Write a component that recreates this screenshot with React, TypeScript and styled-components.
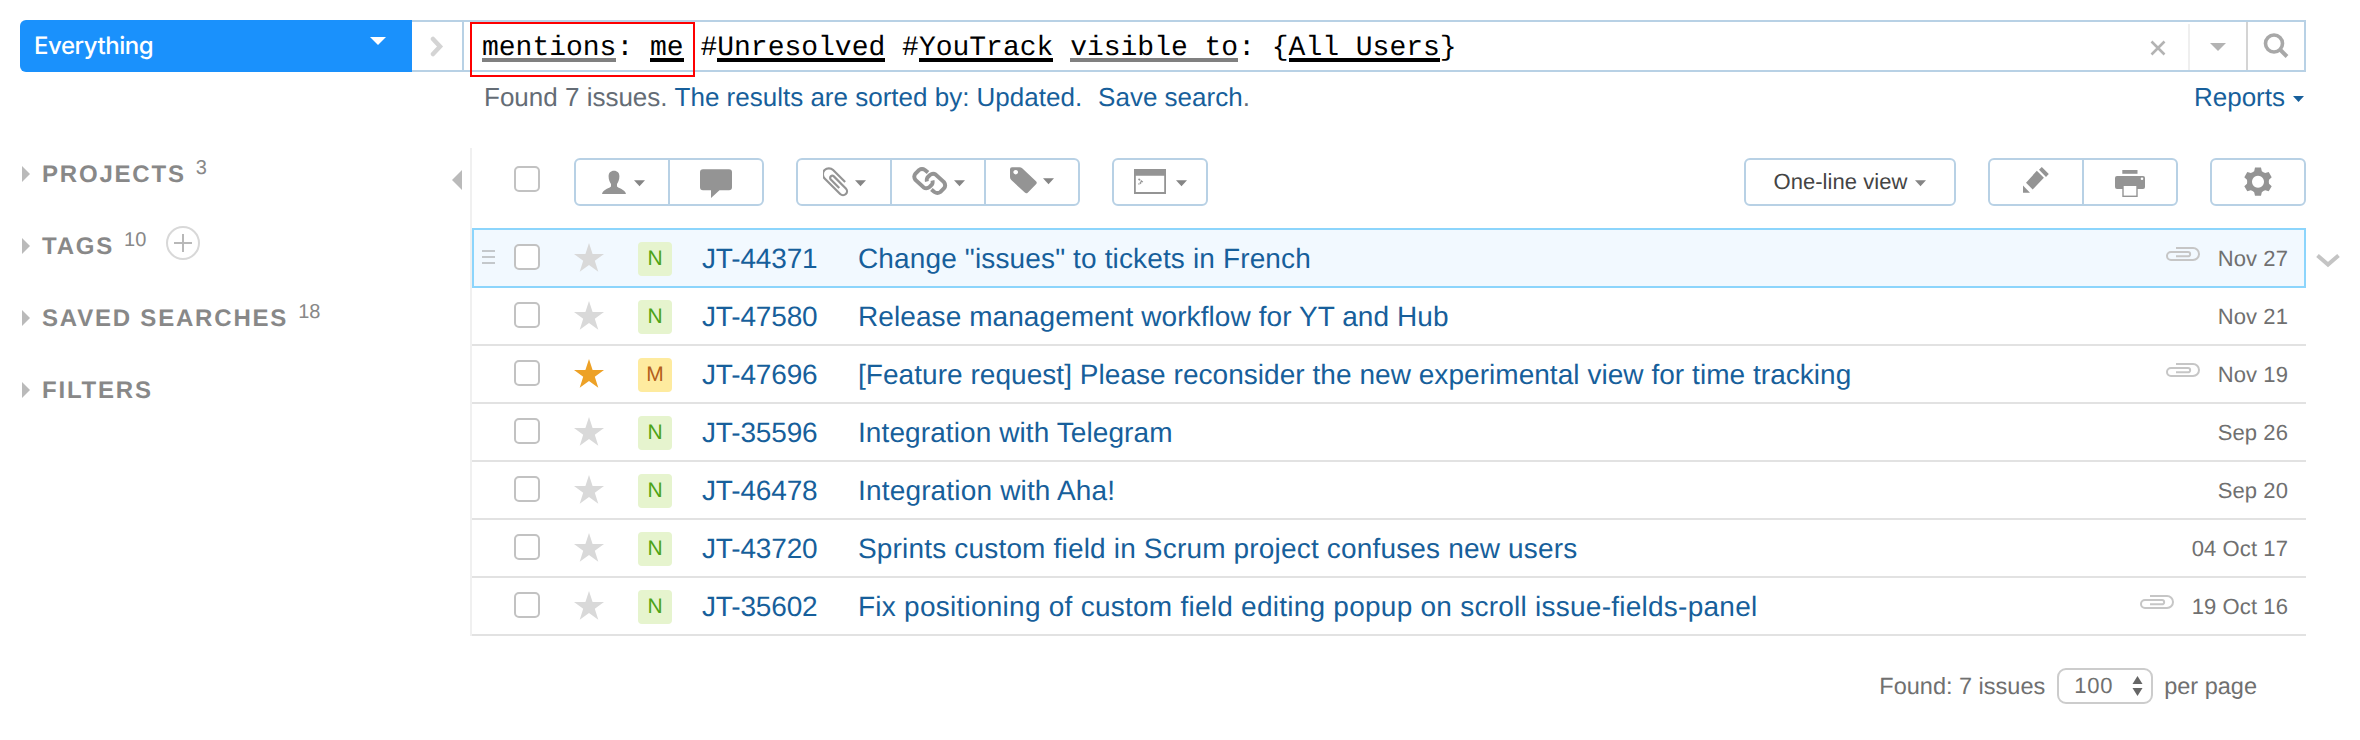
import React from "react";
import styled, { createGlobalStyle } from "styled-components";

const GlobalStyle = createGlobalStyle`
  * { box-sizing: border-box; }
  body { margin: 0; background: #fff; text-rendering: geometricPrecision; }
  svg { display: block; flex: none; }
`;

const colors = {
  link: "#175f9b",
  line: "#b8d1e5",
  icon: "#949494",
  muted: "#bababa",
  text: "#707070",
};

const Page = styled.div`
  width: 2360px;
  height: 740px;
  padding-top: 20px;
  overflow: hidden;
  font-family: "Liberation Sans", Arial, sans-serif;
  white-space: nowrap;
`;

/* ---------- search header ---------- */

const Header = styled.header`
  display: flex;
  width: 2286px;
  height: 52px;
  margin-left: 20px;
`;

const ContextSelect = styled.div`
  display: flex;
  align-items: center;
  justify-content: space-between;
  width: 392px;
  padding: 0 26px 0 14px;
  border-radius: 6px 0 0 6px;
  background: #1a91fc;
  color: #fff;
  font: 500 24px/50px Inter, sans-serif;
  letter-spacing: -0.45px;
`;

const ContextLabel = styled.span`
  margin-top: -1px;
`;

const SearchBox = styled.div`
  display: flex;
  flex: 1;
  border: 2px solid ${colors.line};
  border-left: 0;
`;

const SearchCell = styled.div<{ $w: number; $divider?: string; $inset?: number; $shift?: number }>`
  display: flex;
  align-items: center;
  justify-content: center;
  width: ${(p) => p.$w}px;
  margin-top: ${(p) => p.$inset ?? 0}px;
  padding-bottom: ${(p) => p.$shift ?? 0}px;
  border-left: ${(p) => (p.$divider ? `2px solid ${p.$divider}` : "0")};
`;

const Query = styled.div`
  position: relative;
  flex: 1;
  padding-left: 18px;
  border-left: 2px solid ${colors.line};
  color: #000;
  font: 28px/54px "Liberation Mono", "Courier New", monospace;
  white-space: pre;
`;

const Term = styled.span<{ $tone: string }>`
  display: inline-block;
  height: 40px;
  line-height: 54px;
  vertical-align: top;
  border-bottom: 4px solid ${(p) => p.$tone};
`;

const Highlight = styled.div`
  position: absolute;
  left: 6px;
  top: 0;
  width: 225px;
  height: 55px;
  border: 2px solid #fe0000;
`;

const SubHeader = styled.div`
  display: flex;
  width: 2304px;
  height: 76px;
  padding: 10px 0 0 484px;
  color: #646c75;
  font-size: 26px;
  line-height: 30px;
`;

const Link = styled.a<{ $gap?: number }>`
  margin-left: ${(p) => p.$gap ?? 0}px;
  color: ${colors.link};
`;

const Reports = styled.div`
  display: flex;
  align-items: center;
  gap: 8px;
  height: 30px;
  margin-left: auto;
  color: ${colors.link};
`;

/* ---------- body ---------- */

const Body = styled.div`
  display: flex;
`;

const Sidebar = styled.nav`
  display: flex;
  justify-content: space-between;
  width: 470px;
  padding: 0 8px 0 22px;
`;

const SectionList = styled.div`
  display: flex;
  flex-direction: column;
  gap: 20px;
`;

const Section = styled.div`
  display: flex;
  align-items: center;
  height: 52px;
  color: #888;
`;

const SectionName = styled.span`
  margin-left: 12px;
  padding-top: 2px;
  font-size: 24px;
  font-weight: bold;
  line-height: 50px;
  letter-spacing: 1.8px;
`;

const Count = styled.sup`
  margin: -13px 0 0 10px;
  font-size: 20px;
  line-height: 24px;
  vertical-align: baseline;
`;

const AddTag = styled.div`
  display: flex;
  align-items: center;
  justify-content: center;
  width: 34px;
  height: 34px;
  margin: -6px 0 0 20px;
  border: 2px solid #d8d8d8;
  border-radius: 50%;
`;

const Collapse = styled.div`
  padding-top: 22px;
`;

const Main = styled.main`
  width: 1836px;
`;

const IssuePanel = styled.section`
  border-left: 2px solid #f0f0f0;
`;

const Toolbar = styled.div`
  display: flex;
  height: 80px;
  padding: 10px 0 22px 42px;
`;

const Checkbox = styled.span`
  flex: none;
  width: 26px;
  height: 26px;
  border: 2px solid #c2c2c2;
  border-radius: 5px;
  background: #fff;
`;

const ToolbarCheck = styled(Checkbox)`
  margin-top: 8px;
`;

const Group = styled.div<{ $gap: number | "auto" }>`
  display: flex;
  height: 48px;
  margin-left: ${(p) => (p.$gap === "auto" ? "auto" : `${p.$gap}px`)};
  border: 2px solid ${colors.line};
  border-radius: 6px;
`;

const ToolButton = styled.div<{ $pad: number; $gap?: number; $w?: number }>`
  display: flex;
  align-items: center;
  gap: ${(p) => p.$gap ?? 0}px;
  width: ${(p) => p.$w ?? 92}px;
  padding-left: ${(p) => p.$pad}px;
  color: #444;
  font-size: 22px;
  line-height: 44px;
  letter-spacing: 0.05px;
  & + & {
    width: 94px;
    border-left: 2px solid ${colors.line};
  }
`;

const Lift = styled.span`
  padding-bottom: 4px;
`;

const Row = styled.div<{ $selected?: boolean }>`
  position: relative;
  display: flex;
  align-items: center;
  height: ${(p) => (p.$selected ? 60 : 58)}px;
  width: 1834px;
  border: 0 solid ${(p) => (p.$selected ? "#8cd5fc" : "#e2e2e2")};
  border-width: ${(p) => (p.$selected ? "2px" : "0 0 2px")};
  background: ${(p) => (p.$selected ? "#f2f9ff" : "transparent")};
  padding: ${(p) => (p.$selected ? "0 16px 0 0" : "0 18px 0 2px")};
`;

const Handle = styled.div`
  width: 40px;
  padding-left: 8px;
`;

const RowCheck = styled(Checkbox)`
  margin-top: -2px;
`;

const StarSlot = styled.div`
  margin: -2px 0 0 34px;
`;

const Badge = styled.span<{ $major?: boolean }>`
  width: 34px;
  height: 34px;
  margin: 2px 0 0 34px;
  border-radius: 4px;
  background: ${(p) => (p.$major ? "#feeb9f" : "#e6f4ce")};
  color: ${(p) => (p.$major ? "#b45f1b" : "#4da317")};
  font-size: 21px;
  line-height: 34px;
  text-align: center;
`;

const IssueId = styled.a`
  width: 156px;
  margin-left: 30px;
  padding-top: 1px;
  color: ${colors.link};
  font-size: 28px;
  line-height: 55px;
  letter-spacing: -0.15px;
`;

const Title = styled.a<{ $tracking: number }>`
  flex: 1;
  padding-top: 1px;
  color: ${colors.link};
  font-size: 28px;
  line-height: 55px;
  letter-spacing: ${(p) => p.$tracking}px;
`;

const DateText = styled.span`
  margin-left: 18px;
  padding-top: 1px;
  color: ${colors.text};
  font-size: 22px;
  line-height: 55px;
  letter-spacing: 0.1px;
`;

const ClipSlot = styled.div`
  margin-top: -8px;
`;

const RowExpand = styled.div`
  position: absolute;
  left: 1842px;
  top: 24px;
`;

const Footer = styled.footer`
  display: flex;
  align-items: center;
  justify-content: flex-end;
  height: 36px;
  margin: 32px 49px 0 0;
  color: ${colors.text};
  font-size: 23.5px;
  line-height: 36px;
`;

const PageSize = styled.div`
  display: flex;
  align-items: center;
  justify-content: space-between;
  width: 96px;
  height: 36px;
  margin: 0 11px 0 12px;
  padding: 0 8px 0 15px;
  border: 2px solid #ccc;
  border-radius: 9px;
  font-size: 22px;
  letter-spacing: 0.8px;
`;

/* ---------- icons ---------- */

const Triangle = ({ w, h, dir = "down", fill }: { w: number; h: number; dir?: string; fill: string }) => {
  const points: Record<string, string> = {
    down: `0,0 ${w},0 ${w / 2},${h}`,
    right: `0,0 ${w},${h / 2} 0,${h}`,
    left: `${w},0 0,${h / 2} ${w},${h}`,
  };
  return (
    <svg width={w} height={h}>
      <polygon points={points[dir]} fill={fill} />
    </svg>
  );
};

const Caret = () => (
  <svg width="11" height="32">
    <path d="M0 14.3H11L5.5 20.3Z" fill="#858585" />
  </svg>
);

const Glyph = ({ w, children }: { w: number; children: React.ReactNode }) => (
  <svg width={w} height="32" fill={colors.icon}>
    {children}
  </svg>
);

const clipPath = "M10 1H27a6 6 0 0 1 0 12H5a4 4 0 0 1 0-8H22a2.15 2.15 0 0 1 0 4.3H10";

const UserIcon = () => (
  <Glyph w={24}>
    <path d="M12 4.7c3.4 0 5.4 2.2 5.4 5.6 0 3.5-1.2 6.2-2.4 7.6v2.6c1 1.6 8 2.6 9 7.5H0c1-4.9 8-5.9 9-7.5v-2.6c-1.2-1.4-2.4-4.1-2.4-7.6 0-3.4 2-5.6 5.4-5.6z" />
  </Glyph>
);

const CommentIcon = () => (
  <Glyph w={32}>
    <path d="M3 3.3h26a3 3 0 0 1 3 3v15a3 3 0 0 1-3 3H19.5L11 32V24.3H3a3 3 0 0 1-3-3v-15a3 3 0 0 1 3-3z" />
  </Glyph>
);

const AttachIcon = () => (
  <Glyph w={27}>
    <path
      d={clipPath}
      transform="translate(13.3 15.7) rotate(225) scale(1 -1) translate(-16.5 -7)"
      fill="none"
      stroke={colors.icon}
      strokeWidth="2.2"
    />
  </Glyph>
);

const linkHalf =
  "M16 6.5L13 4Q10 2 7 4L3.5 7.5Q1 10.5 3.5 14L11.5 21.3Q14.5 23.3 17.5 21L20 18.5Q21 17 20.5 14.5";

const LinkIcon = () => (
  <Glyph w={36}>
    <g fill="none" stroke={colors.icon} strokeWidth="3.9">
      <path d={linkHalf} />
      <path d={linkHalf} transform="rotate(180 17.7 15)" />
    </g>
  </Glyph>
);

const TagIcon = () => (
  <Glyph w={27}>
    <path
      fillRule="evenodd"
      d="M2 1.3H9.5Q11 1.3 12.5 2.6L26 15.3Q27.5 16.7 26 18.2L17.7 26.7Q16.3 28 14.8 26.6L1.3 14Q0 12.8 0 11V3.3Q0 1.3 2 1.3ZM5.7 3.9a2.3 2.3 0 1 0 .01 0z"
    />
  </Glyph>
);

const CommandIcon = () => (
  <Glyph w={32}>
    <path fillRule="evenodd" d="M0 3H32V28H0ZM1.8 9.7V26H30.2V9.7Z" />
    <path d="M4.5 13L8 15.7 4.5 18.4" fill="none" stroke={colors.icon} strokeWidth="1.6" strokeDasharray="2 .7" />
  </Glyph>
);

const PencilIcon = () => (
  <Glyph w={26}>
    <path d="M13.8 4.8L20.9 11.8 9.7 23.5 3 16.7ZM0 19.5L7 26.7H0ZM18.8 1L25.8 8 23 11 16 3.7Z" />
  </Glyph>
);

const PrintIcon = () => (
  <Glyph w={30}>
    <rect x="7.3" y="4" width="15.2" height="3.8" />
    <rect x="0" y="10" width="30" height="13" rx="2" />
    <circle cx="27" cy="12.7" r="1.3" fill="#fff" />
    <rect x="8" y="19.3" width="14" height="11" fill="#fff" stroke={colors.icon} strokeWidth="1.4" />
  </Glyph>
);

const gearPoints = Array.from({ length: 6 }, (_, i) =>
  [
    [-30, 10.8],
    [-20, 11.2],
    [-12, 14.4],
    [12, 14.4],
    [20, 11.2],
  ].map(([offset, r]) => {
    const a = ((i * 60 - 90 + offset) * Math.PI) / 180;
    return `${(14 + r * Math.cos(a)).toFixed(2)} ${(15.7 + r * Math.sin(a)).toFixed(2)}`;
  })
)
  .flat()
  .join("L");

const GearIcon = () => (
  <Glyph w={28}>
    <path fillRule="evenodd" d={`M${gearPoints}ZM14 9.7a6 6 0 1 0 .01 0z`} />
  </Glyph>
);

const StarIcon = ({ on }: { on?: boolean }) => (
  <svg width="30" height="29" viewBox="0 0 30 29" fill={on ? "#eda126" : "#d9d9d9"}>
    <path d="M15 0L18.6 11H30L20.8 17.8 24.3 28.7 15 22 5.7 28.7 9.2 17.8 0 11H11.4Z" />
  </svg>
);

const RowClip = () => (
  <svg width="34" height="14" fill="none" stroke="#c6c6c6" strokeWidth="2">
    <path d={clipPath} />
  </svg>
);

/* ---------- data ---------- */

const sections = [
  { name: "PROJECTS", count: 3 },
  { name: "TAGS", count: 10, add: true },
  { name: "SAVED SEARCHES", count: 18 },
  { name: "FILTERS" },
];

const issues = [
  {
    id: "JT-44371",
    title: 'Change "issues" to tickets in French',
    tracking: 0.14,
    date: "Nov 27",
    clip: true,
    selected: true,
  },
  { id: "JT-47580", title: "Release management workflow for YT and Hub", tracking: 0.08, date: "Nov 21" },
  {
    id: "JT-47696",
    title: "[Feature request] Please reconsider the new experimental view for time tracking",
    tracking: 0.045,
    date: "Nov 19",
    clip: true,
    major: true,
  },
  { id: "JT-35596", title: "Integration with Telegram", tracking: 0.09, date: "Sep 26" },
  { id: "JT-46478", title: "Integration with Aha!", tracking: 0.17, date: "Sep 20" },
  {
    id: "JT-43720",
    title: "Sprints custom field in Scrum project confuses new users",
    tracking: 0.175,
    date: "04 Oct 17",
  },
  {
    id: "JT-35602",
    title: "Fix positioning of custom field editing popup on scroll issue-fields-panel",
    tracking: 0.25,
    date: "19 Oct 16",
    clip: true,
  },
];

export default function App() {
  return (
    <Page>
      <GlobalStyle />
      <Header>
        <ContextSelect>
          <ContextLabel>Everything</ContextLabel>
          <svg width="16" height="18">
            <path d="M0 0H16L8 8Z" fill="#fff" />
          </svg>
        </ContextSelect>
        <SearchBox>
          <SearchCell $w={50}>
            <svg width="14" height="22" fill="none" stroke="#d4d4d4" strokeWidth="4.5" strokeLinecap="round">
              <path d="M3 4L10 11.5 3 19" />
            </svg>
          </SearchCell>
          <Query>
            <Term $tone="#808080">mentions</Term>: <Term $tone="#000">me</Term> #<Term $tone="#000">Unresolved</Term> #
            <Term $tone="#000">YouTrack</Term> <Term $tone="#808080">visible to</Term>: {"{"}
            <Term $tone="#000">All Users</Term>
            {"}"}
            <Highlight />
          </Query>
          <SearchCell $w={60}>
            <svg width="16" height="20" fill="none" stroke="#b3b3b3" strokeWidth="2.6">
              <path d="M1.5 5.5L14.5 18.5M14.5 5.5L1.5 18.5" />
            </svg>
          </SearchCell>
          <SearchCell $w={58} $divider="#efefef" $inset={2}>
            <Triangle w={16} h={8} fill="#b3b3b3" />
          </SearchCell>
          <SearchCell $w={58} $divider="#d4d4d4" $shift={3}>
            <svg width="26" height="26" fill="none" stroke="#a8a8a8">
              <circle cx="11" cy="11.5" r="8.5" strokeWidth="3.6" />
              <path d="M17 17.5L24 24.5" strokeWidth="4" />
            </svg>
          </SearchCell>
        </SearchBox>
      </Header>
      <SubHeader>
        <span>Found 7 issues.</span>
        <Link $gap={7}>The results are sorted by: Updated.</Link>
        <Link $gap={16}>Save search</Link>
        <span>.</span>
        <Reports>
          Reports
          <svg width="11" height="10">
            <path d="M0 4H11L5.5 10Z" fill={colors.link} />
          </svg>
        </Reports>
      </SubHeader>
      <Body>
        <Sidebar>
          <SectionList>
            {sections.map((s) => (
              <Section key={s.name}>
                <Triangle w={8} h={16} dir="right" fill={colors.muted} />
                <SectionName>{s.name}</SectionName>
                {s.count && <Count>{s.count}</Count>}
                {s.add && (
                  <AddTag>
                    <svg width="18" height="18" stroke="#b8b8b8" strokeWidth="2">
                      <path d="M9 0V18M0 9H18" />
                    </svg>
                  </AddTag>
                )}
              </Section>
            ))}
          </SectionList>
          <Collapse>
            <Triangle w={10} h={20} dir="left" fill={colors.muted} />
          </Collapse>
        </Sidebar>
        <Main>
          <IssuePanel>
            <Toolbar>
              <ToolbarCheck />
              <Group $gap={34}>
                <ToolButton $pad={26} $gap={8}>
                  <UserIcon />
                  <Caret />
                </ToolButton>
                <ToolButton $pad={30}>
                  <CommentIcon />
                </ToolButton>
              </Group>
              <Group $gap={32}>
                <ToolButton $pad={25} $gap={5}>
                  <AttachIcon />
                  <Caret />
                </ToolButton>
                <ToolButton $pad={20} $gap={6}>
                  <LinkIcon />
                  <Caret />
                </ToolButton>
                <ToolButton $pad={24} $gap={6}>
                  <TagIcon />
                  <Lift>
                    <Caret />
                  </Lift>
                </ToolButton>
              </Group>
              <Group $gap={32}>
                <ToolButton $pad={20} $gap={10}>
                  <CommandIcon />
                  <Caret />
                </ToolButton>
              </Group>
              <Group $gap="auto">
                <ToolButton $pad={27.5} $gap={8} $w={208}>
                  <span>One-line view</span>
                  <Caret />
                </ToolButton>
              </Group>
              <Group $gap={32}>
                <ToolButton $pad={33}>
                  <PencilIcon />
                </ToolButton>
                <ToolButton $pad={31}>
                  <PrintIcon />
                </ToolButton>
              </Group>
              <Group $gap={32}>
                <ToolButton $pad={32}>
                  <GearIcon />
                </ToolButton>
              </Group>
            </Toolbar>
            {issues.map((issue) => (
              <Row key={issue.id} $selected={issue.selected}>
                <Handle>
                  {issue.selected && (
                    <svg width="13" height="20" stroke="#c4c8cb" strokeWidth="2">
                      <path d="M0 3H13M0 9H13M0 15H13" />
                    </svg>
                  )}
                </Handle>
                <RowCheck />
                <StarSlot>
                  <StarIcon on={issue.major} />
                </StarSlot>
                <Badge $major={issue.major}>{issue.major ? "M" : "N"}</Badge>
                <IssueId>{issue.id}</IssueId>
                <Title $tracking={issue.tracking}>{issue.title}</Title>
                {issue.clip && (
                  <ClipSlot>
                    <RowClip />
                  </ClipSlot>
                )}
                <DateText>{issue.date}</DateText>
                {issue.selected && (
                  <RowExpand>
                    <svg width="24" height="14" fill="none" stroke="#c4c4c4" strokeWidth="4">
                      <path d="M1.5 1.5L12 10.5 22.5 1.5" />
                    </svg>
                  </RowExpand>
                )}
              </Row>
            ))}
          </IssuePanel>
          <Footer>
            <span>Found: 7 issues</span>
            <PageSize>
              100
              <svg width="11" height="20" fill="#666">
                <path d="M5.5 0L10.5 8H.5ZM.5 12H10.5L5.5 20Z" />
              </svg>
            </PageSize>
            <span>per page</span>
          </Footer>
        </Main>
      </Body>
    </Page>
  );
}
